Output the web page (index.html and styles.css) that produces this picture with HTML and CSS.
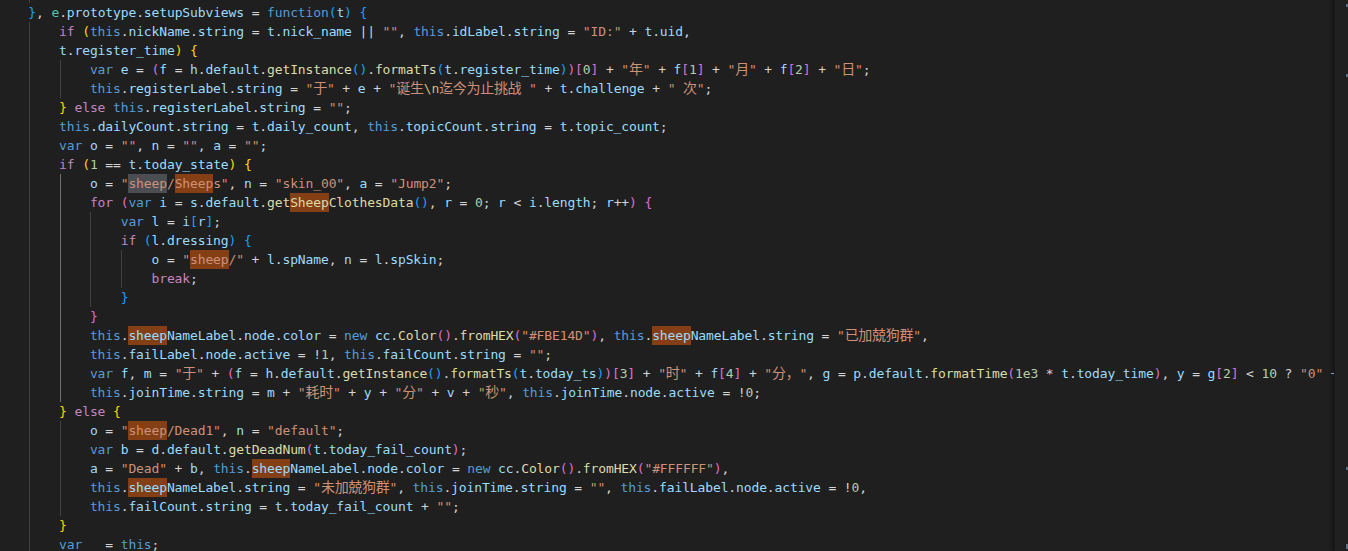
FILE: index.html
```html
<!DOCTYPE html>
<html lang="zh">
<head>
<meta charset="utf-8">
<title>editor</title>
<link rel="stylesheet" href="styles.css">
</head>
<body>
<div class="editor">
<div class="code">
<div class="ln d3">        <span class="b1">}</span></div>
<div class="ln d2">    <span class="b3">}</span>, <span class="t">e</span>.<span class="v">prototype</span>.<span class="v">setupSubviews</span> = <span class="k">function</span><span class="b3">(</span><span class="v">t</span><span class="b3">)</span> <span class="b3">{</span></div>
<div class="ln d3">        <span class="c">if</span> <span class="b1">(</span><span class="k">this</span>.<span class="v">nickName</span>.<span class="v">string</span> = <span class="v">t</span>.<span class="v">nick_name</span> || <span class="s">""</span>, <span class="k">this</span>.<span class="v">idLabel</span>.<span class="v">string</span> = <span class="s">"ID:"</span> + <span class="v">t</span>.<span class="v">uid</span>,</div>
<div class="ln d3">        <span class="v">t</span>.<span class="v">register_time</span><span class="b1">)</span> <span class="b1">{</span></div>
<div class="ln d4">            <span class="k">var</span> <span class="v">e</span> = <span class="b2">(</span><span class="v">f</span> = <span class="v">h</span>.<span class="v">default</span>.<span class="f">getInstance</span><span class="b3">()</span>.<span class="f">formatTs</span><span class="b3">(</span><span class="v">t</span>.<span class="v">register_time</span><span class="b3">)</span><span class="b2">)[</span><span class="n">0</span><span class="b2">]</span> + <span class="s">"<span class="zh">年</span>"</span> + <span class="v">f</span><span class="b2">[</span><span class="n">1</span><span class="b2">]</span> + <span class="s">"<span class="zh">月</span>"</span> + <span class="v">f</span><span class="b2">[</span><span class="n">2</span><span class="b2">]</span> + <span class="s">"<span class="zh">日</span>"</span>;</div>
<div class="ln d4">            <span class="k">this</span>.<span class="v">registerLabel</span>.<span class="v">string</span> = <span class="s">"<span class="zh">于</span>"</span> + <span class="v">e</span> + <span class="s">"<span class="zh">诞生</span><span class="e">\n</span><span class="zh">迄今为止挑战</span> "</span> + <span class="v">t</span>.<span class="v">challenge</span> + <span class="s">" <span class="zh">次</span>"</span>;</div>
<div class="ln d3">        <span class="b1">}</span> <span class="c">else</span> <span class="k">this</span>.<span class="v">registerLabel</span>.<span class="v">string</span> = <span class="s">""</span>;</div>
<div class="ln d3">        <span class="k">this</span>.<span class="v">dailyCount</span>.<span class="v">string</span> = <span class="v">t</span>.<span class="v">daily_count</span>, <span class="k">this</span>.<span class="v">topicCount</span>.<span class="v">string</span> = <span class="v">t</span>.<span class="v">topic_count</span>;</div>
<div class="ln d3">        <span class="k">var</span> <span class="v">o</span> = <span class="s">""</span>, <span class="v">n</span> = <span class="s">""</span>, <span class="v">a</span> = <span class="s">""</span>;</div>
<div class="ln d3">        <span class="c">if</span> <span class="b1">(</span><span class="n">1</span> == <span class="v">t</span>.<span class="v">today_state</span><span class="b1">)</span> <span class="b1">{</span></div>
<div class="ln d4 act">            <span class="v">o</span> = <span class="s">"<span class="hg">sheep</span>/<span class="hl">Sheep</span>s"</span>, <span class="v">n</span> = <span class="s">"skin_00"</span>, <span class="v">a</span> = <span class="s">"Jump2"</span>;</div>
<div class="ln d4 act">            <span class="c">for</span> <span class="b2">(</span><span class="k">var</span> <span class="v">i</span> = <span class="v">s</span>.<span class="v">default</span>.<span class="f">get<span class="hl">Sheep</span>ClothesData</span><span class="b3">()</span>, <span class="v">r</span> = <span class="n">0</span>; <span class="v">r</span> &lt; <span class="v">i</span>.<span class="v">length</span>; <span class="v">r</span>++<span class="b2">)</span> <span class="b2">{</span></div>
<div class="ln d5 act">                <span class="k">var</span> <span class="v">l</span> = <span class="v">i</span><span class="b3">[</span><span class="v">r</span><span class="b3">]</span>;</div>
<div class="ln d5 act">                <span class="c">if</span> <span class="b3">(</span><span class="v">l</span>.<span class="v">dressing</span><span class="b3">)</span> <span class="b3">{</span></div>
<div class="ln d6 act">                    <span class="v">o</span> = <span class="s">"<span class="hl">sheep</span>/"</span> + <span class="v">l</span>.<span class="v">spName</span>, <span class="v">n</span> = <span class="v">l</span>.<span class="v">spSkin</span>;</div>
<div class="ln d6 act">                    <span class="c">break</span>;</div>
<div class="ln d5 act">                <span class="b3">}</span></div>
<div class="ln d4 act">            <span class="b2">}</span></div>
<div class="ln d4 act">            <span class="k">this</span>.<span class="v"><span class="hl">sheep</span>NameLabel</span>.<span class="v">node</span>.<span class="v">color</span> = <span class="k">new</span> <span class="v">cc</span>.<span class="f">Color</span><span class="b2">()</span>.<span class="f">fromHEX</span><span class="b2">(</span><span class="s">"#FBE14D"</span><span class="b2">)</span>, <span class="k">this</span>.<span class="v"><span class="hl">sheep</span>NameLabel</span>.<span class="v">string</span> = <span class="s">"<span class="zh">已加兢狗群</span>"</span>,</div>
<div class="ln d4 act">            <span class="k">this</span>.<span class="v">failLabel</span>.<span class="v">node</span>.<span class="v">active</span> = !<span class="n">1</span>, <span class="k">this</span>.<span class="v">failCount</span>.<span class="v">string</span> = <span class="s">""</span>;</div>
<div class="ln d4 act">            <span class="k">var</span> <span class="v">f</span>, <span class="v">m</span> = <span class="s">"<span class="zh">于</span>"</span> + <span class="b2">(</span><span class="v">f</span> = <span class="v">h</span>.<span class="v">default</span>.<span class="f">getInstance</span><span class="b3">()</span>.<span class="f">formatTs</span><span class="b3">(</span><span class="v">t</span>.<span class="v">today_ts</span><span class="b3">)</span><span class="b2">)[</span><span class="n">3</span><span class="b2">]</span> + <span class="s">"<span class="zh">时</span>"</span> + <span class="v">f</span><span class="b2">[</span><span class="n">4</span><span class="b2">]</span> + <span class="s">"<span class="zh">分，</span>"</span>, <span class="v">g</span> = <span class="v">p</span>.<span class="v">default</span>.<span class="f">formatTime</span><span class="b2">(</span><span class="n">1e3</span> * <span class="v">t</span>.<span class="v">today_time</span><span class="b2">)</span>, <span class="v">y</span> = <span class="v">g</span><span class="b2">[</span><span class="n">2</span><span class="b2">]</span> &lt; <span class="n">10</span> ? <span class="s">"0"</span> + <span class="v">g</span><span class="b2">[</span><span class="n">2</span><span class="b2">]</span> : <span class="v">g</span><span class="b2">[</span><span class="n">2</span><span class="b2">]</span>, <span class="v">v</span> = <span class="v">g</span><span class="b2">[</span><span class="n">3</span><span class="b2">]</span>;</div>
<div class="ln d4 act">            <span class="k">this</span>.<span class="v">joinTime</span>.<span class="v">string</span> = <span class="v">m</span> + <span class="s">"<span class="zh">耗时</span>"</span> + <span class="v">y</span> + <span class="s">"<span class="zh">分</span>"</span> + <span class="v">v</span> + <span class="s">"<span class="zh">秒</span>"</span>, <span class="k">this</span>.<span class="v">joinTime</span>.<span class="v">node</span>.<span class="v">active</span> = !<span class="n">0</span>;</div>
<div class="ln d3">        <span class="b1">}</span> <span class="c">else</span> <span class="b1">{</span></div>
<div class="ln d4">            <span class="v">o</span> = <span class="s">"<span class="hl">sheep</span>/Dead1"</span>, <span class="v">n</span> = <span class="s">"default"</span>;</div>
<div class="ln d4">            <span class="k">var</span> <span class="v">b</span> = <span class="v">d</span>.<span class="v">default</span>.<span class="f">getDeadNum</span><span class="b2">(</span><span class="v">t</span>.<span class="v">today_fail_count</span><span class="b2">)</span>;</div>
<div class="ln d4">            <span class="v">a</span> = <span class="s">"Dead"</span> + <span class="v">b</span>, <span class="k">this</span>.<span class="v"><span class="hl">sheep</span>NameLabel</span>.<span class="v">node</span>.<span class="v">color</span> = <span class="k">new</span> <span class="v">cc</span>.<span class="f">Color</span><span class="b2">()</span>.<span class="f">fromHEX</span><span class="b2">(</span><span class="s">"#FFFFFF"</span><span class="b2">)</span>,</div>
<div class="ln d4">            <span class="k">this</span>.<span class="v"><span class="hl">sheep</span>NameLabel</span>.<span class="v">string</span> = <span class="s">"<span class="zh">未加兢狗群</span>"</span>, <span class="k">this</span>.<span class="v">joinTime</span>.<span class="v">string</span> = <span class="s">""</span>, <span class="k">this</span>.<span class="v">failLabel</span>.<span class="v">node</span>.<span class="v">active</span> = !<span class="n">0</span>,</div>
<div class="ln d4">            <span class="k">this</span>.<span class="v">failCount</span>.<span class="v">string</span> = <span class="v">t</span>.<span class="v">today_fail_count</span> + <span class="s">""</span>;</div>
<div class="ln d3">        <span class="b1">}</span></div>
<div class="ln d3">        <span class="k">var</span> <span class="v">_</span> = <span class="k">this</span>;</div>
</div>
<div class="scrollbar">
<span class="mark m1"></span>
<span class="mark m2"></span>
<span class="mark m3"></span>
<span class="mark m4"></span>
</div>
</div>
</body>
</html>
```

FILE: styles.css
```css
html, body {
  margin: 0;
  padding: 0;
  background: #1f1f1f;
  overflow: hidden;
}

.editor {
  position: relative;
  width: 1348px;
  height: 551px;
  overflow: hidden;
  background: #1f1f1f;
}

.code {
  margin-top: -16px;
  width: 1335px;
  overflow: hidden;
  font-family: "DejaVu Sans Mono", "Noto Sans CJK SC", monospace;
  font-size: 13px;
  line-height: 19px;
  letter-spacing: -0.127px;
  color: #d4d4d4;
}

.ln {
  height: 19px;
  white-space: pre;
  text-indent: -2.5px;
  --g1: transparent;
  --g2: transparent;
  --g3: transparent;
  --g4: transparent;
  background:
    linear-gradient(var(--g1), var(--g1)) 29px 0 / 1px 100% no-repeat,
    linear-gradient(var(--g2), var(--g2)) 60px 0 / 1px 100% no-repeat,
    linear-gradient(var(--g3), var(--g3)) 90px 0 / 1px 100% no-repeat,
    linear-gradient(var(--g4), var(--g4)) 121px 0 / 1px 100% no-repeat;
}

.d3 { --g1: #404040; }
.d4 { --g1: #404040; --g2: #404040; }
.d5 { --g1: #404040; --g2: #404040; --g3: #404040; }
.d6 { --g1: #404040; --g2: #404040; --g3: #404040; --g4: #404040; }
.ln.act { --g2: #707070; }

.k { color: #569cd6; }
.c { color: #c586c0; }
.v { color: #9cdcfe; }
.f { color: #dcdcaa; }
.s { color: #ce9178; }
.n { color: #b5cea8; }
.t { color: #4ec9b0; }
.e { color: #d7ba7d; }
.b1 { color: #ffd700; }
.b2 { color: #da70d6; }
.b3 { color: #179fff; }

.zh {
  font-family: "Noto Sans CJK SC", sans-serif;
  font-size: 14px;
  line-height: 14px;
  letter-spacing: -0.3px;
}

.hl, .hg {
  display: inline-block;
  vertical-align: top;
  height: 19px;
  line-height: 19px;
  text-indent: 0;
}
.hl { background: #843f14; }
.hg { background: #4a4d52; }

.scrollbar {
  position: absolute;
  top: 0;
  right: 0;
  width: 13px;
  height: 100%;
  background: #202020;
  border-left: 1px solid #171717;
  box-shadow: -2px 0 3px rgba(0, 0, 0, 0.35);
}

.mark {
  position: absolute;
  right: 0;
  width: 2px;
  height: 3px;
  background: #56708a;
}
.m1 { top: 4px; }
.m2 { top: 74px; }
.m3 { top: 467px; }
.m4 { top: 544px; height: 5px; }
```
